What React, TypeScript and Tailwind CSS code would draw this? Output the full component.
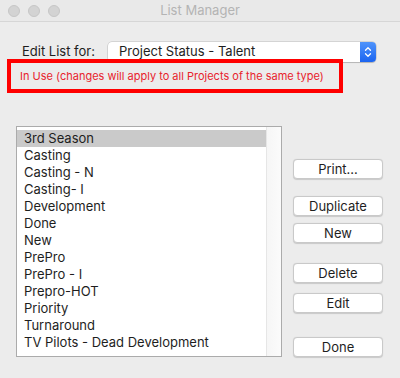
const items = [
  "3rd Season",
  "Casting",
  "Casting - N",
  "Casting- I",
  "Development",
  "Done",
  "New",
  "PrePro",
  "PrePro - I",
  "Prepro-HOT",
  "Priority",
  "Turnaround",
  "TV Pilots - Dead Development",
];

const font = { fontFamily: "Inter, 'Liberation Sans', Arial, sans-serif" };

function MacButton({ label, className }: { label: string; className: string }) {
  return (
    <button
      className={`h-[20px] w-[90px] rounded-[4px] border border-[#c9c9c9] bg-white text-[13px] leading-[18px] text-[#1e1e1e] shadow-[0_0.5px_1px_rgba(0,0,0,0.15)] ${className}`}
    >
      {label}
    </button>
  );
}

export default function App() {
  return (
    <div className="flex h-[378px] w-[400px] flex-col overflow-hidden bg-[#ececec] text-[#1e1e1e]" style={font}>
      {/* title bar */}
      <div className="relative flex h-[22px] shrink-0 items-center border-b border-[#d6d6d6] bg-[#e9e9e9]">
        <div className="flex gap-[8px] pl-[8px]">
          <span className="h-[12px] w-[12px] rounded-full border border-[#c6c6c6] bg-[#d3d3d3]" />
          <span className="h-[12px] w-[12px] rounded-full border border-[#c6c6c6] bg-[#d3d3d3]" />
          <span className="h-[12px] w-[12px] rounded-full border border-[#c6c6c6] bg-[#d3d3d3]" />
        </div>
        <div className="absolute inset-0 flex items-center justify-center text-[13px] text-[#b4b4b4]">List Manager</div>
      </div>

      {/* popup row */}
      <div className="mt-[20px] flex h-[20px] items-center">
        <span className="ml-[22px] w-[86px] text-[13px]">Edit List for:</span>
        <div className="flex h-[20px] w-[268px] items-center justify-between rounded-[4px] bg-white shadow-[0_0_0_0.5px_rgba(0,0,0,0.2),0_1px_1px_rgba(0,0,0,0.15)]">
          <span className="pl-[11px] text-[13px]">Project Status - Talent</span>
          <div className="flex h-[20px] w-[16px] items-center justify-center rounded-r-[4px] bg-gradient-to-b from-[#4f93fb] to-[#1b64f0]">
            <svg width="8" height="12" viewBox="0 0 8 12" fill="none" stroke="white" strokeWidth="1.3" strokeLinecap="round" strokeLinejoin="round">
              <path d="M1.5 4.2 4 1.7 6.5 4.2" />
              <path d="M1.5 7.8 4 10.3 6.5 7.8" />
            </svg>
          </div>
        </div>
      </div>

      {/* in use notice */}
      <div className="ml-[7px] mt-[-3px] flex h-[34px] w-[336px] items-center border-[4px] border-[#ff0000] pl-[9px]">
        <span className="text-[11px] text-[#e8232d]">In Use (changes will apply to all Projects of the same type)</span>
      </div>

      {/* list and buttons */}
      <div className="mt-[33px] flex">
        <div className="ml-[16px] flex h-[231px] w-[266px] border border-[#ababab] bg-white">
          <div className="flex-1 pt-[3px]">
            {items.map((item, i) => (
              <div
                key={item}
                className={`h-[17px] pl-[7px] text-[13px] leading-[17px] ${i === 0 ? "bg-[#cacaca]" : ""}`}
              >
                {item}
              </div>
            ))}
          </div>
          <div className="w-[15px] border-l border-[#e6e6e6] bg-gradient-to-r from-[#f6f6f6] to-[#fbfbfb]" />
        </div>

        <div className="ml-[11px] flex flex-col">
          <MacButton label="Print..." className="mt-[33px]" />
          <MacButton label="Duplicate" className="mt-[17px]" />
          <MacButton label="New" className="mt-[7px]" />
          <MacButton label="Delete" className="mt-[20px]" />
          <MacButton label="Edit" className="mt-[10px]" />
          <MacButton label="Done" className="mt-[24px]" />
        </div>
      </div>
    </div>
  );
}
